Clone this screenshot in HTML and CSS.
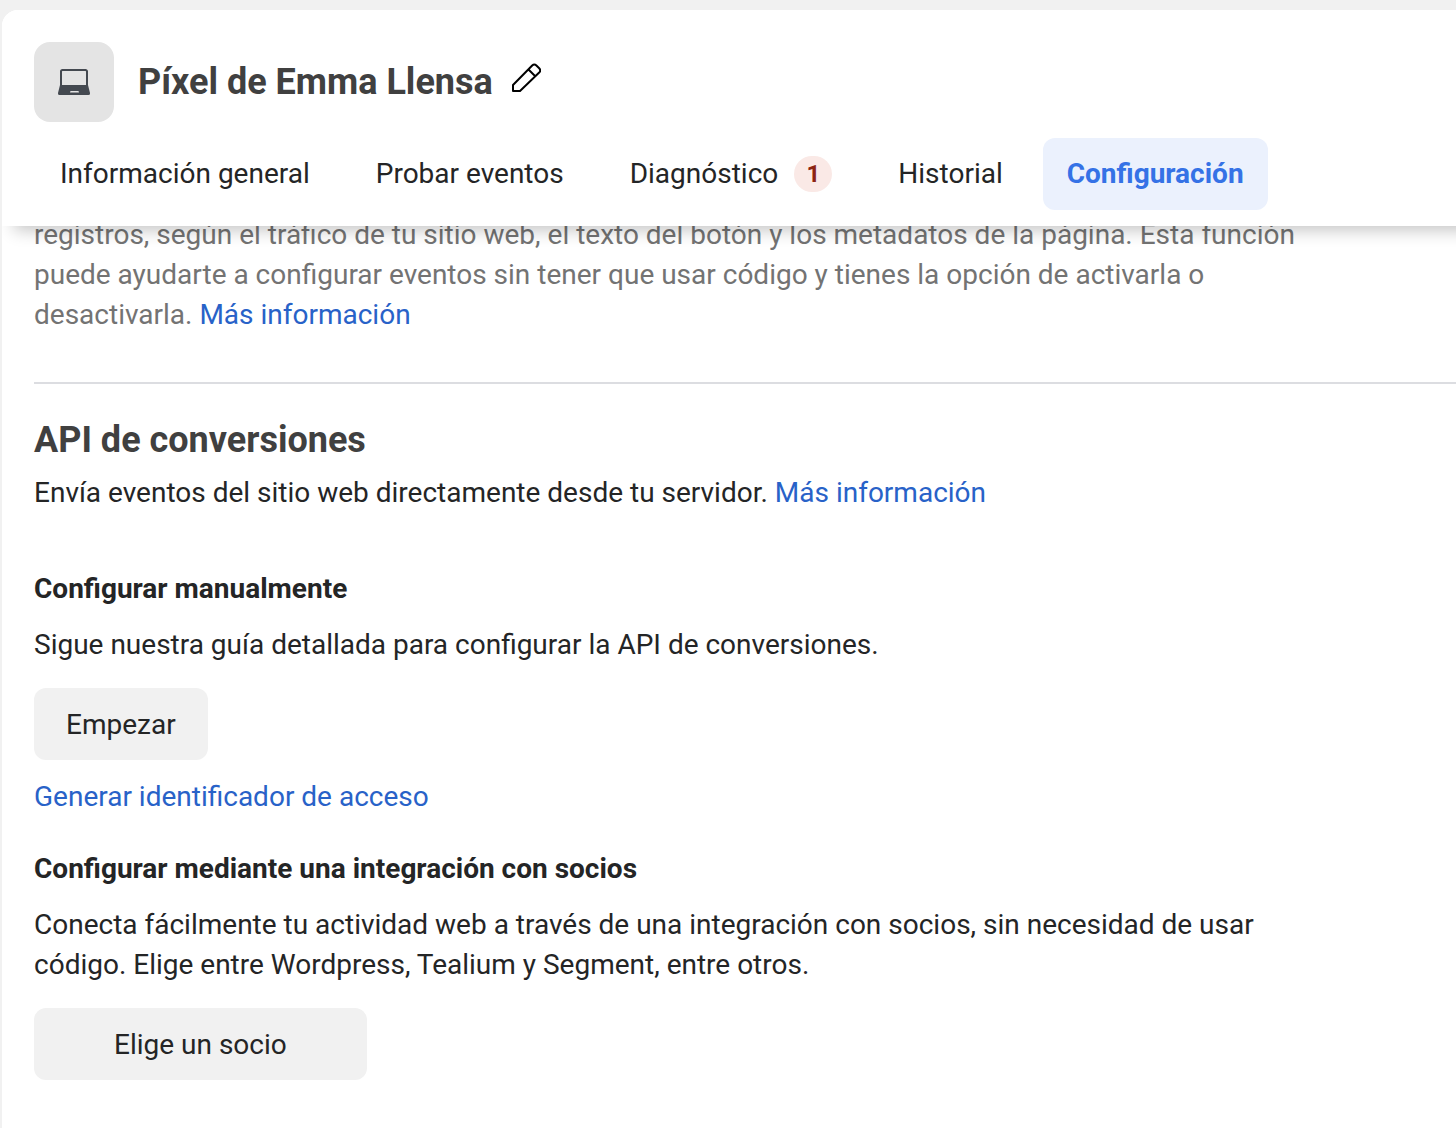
FILE: index.html
```html
<!DOCTYPE html>
<html lang="es">
<head>
<meta charset="utf-8">
<meta name="viewport" content="width=device-width, initial-scale=1">
<title>Píxel de Emma Llensa</title>
<link rel="stylesheet" href="styles.css">
</head>
<body>
<div class="panel">
  <header class="header">
    <div class="title-row">
      <span class="source-icon">
        <svg width="36" height="36" viewBox="0 0 36 36" aria-hidden="true">
          <path d="M5 22V7.500A1.500 1.500 0 0 1 6.500 6h23A1.500 1.500 0 0 1 31 7.500V22" fill="none" stroke="#444950" stroke-width="2"/>
          <path d="M4 21h28l2 8a1.600 1.600 0 0 1-1.600 2H3.600A1.600 1.600 0 0 1 2 29z" fill="#444950"/>
          <path d="M14 28.600L14.500 27h8l.5 1.600z" fill="#e4e4e4"/>
        </svg>
      </span>
      <h1 class="title">Píxel de Emma Llensa</h1>
      <button class="edit" type="button" aria-label="Editar nombre">
        <svg width="32" height="32" viewBox="0 0 32 32" aria-hidden="true">
          <path d="M4 29V23L23.200 3.500a3 3 0 0 1 4.200 0l2.800 2.800a3 3 0 0 1 0 4.200L11 29zM19.500 7.500l6.500 6.500" fill="none" stroke="#000" stroke-width="2" stroke-linejoin="round"/>
        </svg>
      </button>
    </div>
    <nav class="tabs">
      <a class="tab" href="#general">Información general</a>
      <a class="tab" href="#probar">Probar eventos</a>
      <a class="tab" href="#diagnostico">Diagnóstico <span class="badge">1</span></a>
      <a class="tab" href="#historial">Historial</a>
      <a class="tab tab-active" href="#configuracion" aria-current="page">Configuración</a>
    </nav>
  </header>
  <main class="content">
    <p class="text text-muted">registros, según el tráfico de tu sitio web, el texto del botón y los metadatos de la página. Esta función puede ayudarte a configurar eventos sin tener que usar código y tienes la opción de activarla o desactivarla. <a href="#info">Más información</a></p>
    <hr class="divider">
    <section>
      <h2 class="heading">API de conversiones</h2>
      <p class="text intro">Envía eventos del sitio web directamente desde tu servidor. <a href="#info-api">Más información</a></p>
      <h3 class="subheading">Configurar manualmente</h3>
      <p class="text">Sigue nuestra guía detallada para configurar la API de conversiones.</p>
      <button class="button" type="button">Empezar</button>
      <a class="token-link" href="#token">Generar identificador de acceso</a>
      <h3 class="subheading">Configurar mediante una integración con socios</h3>
      <p class="text">Conecta fácilmente tu actividad web a través de una integración con socios, sin necesidad de usar código. Elige entre Wordpress, Tealium y Segment, entre otros.</p>
      <button class="button button-wide" type="button">Elige un socio</button>
    </section>
  </main>
</div>
</body>
</html>
```
FILE: styles.css
```css
* { box-sizing: border-box; }

body {
  margin: 0;
  padding: 10px 0 0 2px;
  background: #f1f1f1;
  color: #242526;
  font: 28px/40px Roboto, Arial, sans-serif;
}

h1, h2, h3, p { margin: 0; }

a { color: #2862c8; text-decoration: none; }

button { border: 0; font: inherit; color: inherit; cursor: pointer; }

.panel {
  min-height: calc(100vh - 10px);
  background: #fff;
  border-top-left-radius: 16px;
  overflow: hidden;
}

/* Runs past the right edge so its shadow only fades on the left */
.header {
  position: relative;
  z-index: 1;
  margin-right: -32px;
  padding: 32px 64px 16px 32px;
  background: #fff;
  box-shadow: 0 16px 16px -12px rgba(0, 0, 0, 0.24);
}

.title-row { display: flex; align-items: center; }

.source-icon {
  display: grid;
  place-items: center;
  width: 80px;
  height: 80px;
  margin-right: 24px;
  border-radius: 16px;
  background: #e4e4e4;
}

.title { color: #404040; font-size: 36px; font-weight: 700; }

.edit {
  display: flex;
  margin: 0 0 8px 16px;
  padding: 0;
  background: none;
}

.tabs { display: flex; gap: 14px; margin-top: 16px; }

.tab {
  display: flex;
  align-items: center;
  gap: 16px;
  height: 72px;
  padding: 0 26px;
  border-radius: 12px;
  color: #242526;
}

.tab-active { padding: 0 24px; background: #ebf1fd; color: #3572e6; font-weight: 700; }

.badge {
  width: 38px;
  border-radius: 18px;
  background: #fae9e6;
  color: #8c2412;
  font-size: 24px;
  font-weight: 700;
  line-height: 36px;
  text-align: center;
}

.content { margin-top: -11px; padding: 0 0 48px 32px; }

.text { max-width: 1280px; }

.text-muted { color: #737373; }

.divider { height: 2px; margin: 47px 0 36px; border: 0; background: #dcdde1; }

.heading { color: #404040; font-size: 36px; font-weight: 700; }

.intro { margin: 13px 0 56px; }

.subheading { margin-bottom: 16px; font-size: 28px; font-weight: 700; }

.button {
  display: block;
  height: 72px;
  margin-top: 23px;
  padding: 2px 32px 0;
  border-radius: 12px;
  background: #f1f1f1;
}

.button-wide { padding: 2px 80px 0; }

.token-link { display: block; margin: 17px 0 32px; }
```
